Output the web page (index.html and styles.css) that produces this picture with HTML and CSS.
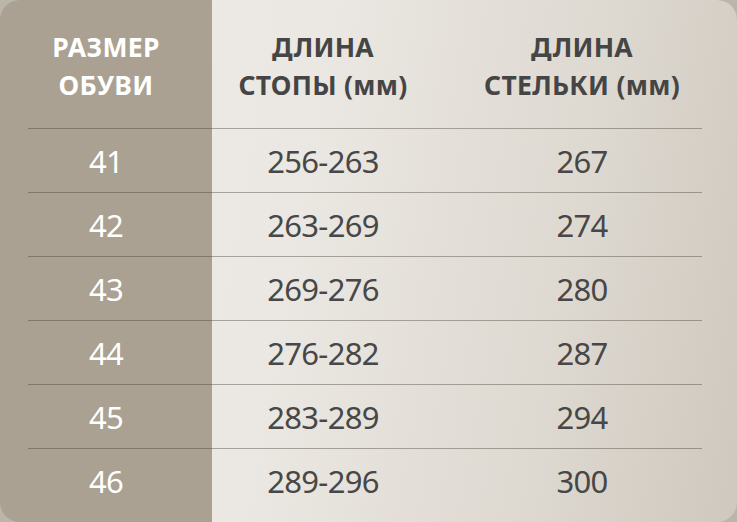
FILE: index.html
```html
<!DOCTYPE html>
<html lang="ru">
<head>
<meta charset="utf-8">
<link rel="stylesheet" href="styles.css">
</head>
<body>
<div class="card">
  <div class="row head">
    <div class="c1">РАЗМЕР<br>ОБУВИ</div>
    <div class="c2">ДЛИНА<br>СТОПЫ (мм)</div>
    <div class="c3">ДЛИНА<br>СТЕЛЬКИ (мм)</div>
  </div>
  <div class="row"><div class="c1">41</div><div class="c2">256-263</div><div class="c3">267</div></div>
  <div class="row"><div class="c1">42</div><div class="c2">263-269</div><div class="c3">274</div></div>
  <div class="row"><div class="c1">43</div><div class="c2">269-276</div><div class="c3">280</div></div>
  <div class="row"><div class="c1">44</div><div class="c2">276-282</div><div class="c3">287</div></div>
  <div class="row"><div class="c1">45</div><div class="c2">283-289</div><div class="c3">294</div></div>
  <div class="row last"><div class="c1">46</div><div class="c2">289-296</div><div class="c3">300</div></div>
</div>
</body>
</html>
```
FILE: styles.css
```css
html, body {
  margin: 0;
  padding: 0;
}
body {
  width: 737px;
  height: 522px;
  background: #bcb5aa;
  overflow: hidden;
  font-family: "Noto Sans", "Open Sans", sans-serif;
}
.card {
  width: 737px;
  height: 522px;
  border-radius: 20px;
  overflow: hidden;
  display: flex;
  flex-direction: column;
  background:
    linear-gradient(90deg, #aaa192 0, #aaa192 212px, transparent 212px),
    linear-gradient(100deg, #eeebe6 0%, #ebe7e2 40%, #ddd8d0 75%, #cfc8be 100%);
}
.row {
  display: grid;
  grid-template-columns: 156px 278px 240px;
  margin: 0 35px 0 28px;
  height: 64px;
  align-items: center;
  text-align: center;
  border-bottom: 1px solid rgba(75, 65, 50, 0.42);
  box-sizing: border-box;
  font-size: 31px;
  letter-spacing: -0.7px;
  color: #474747;
}
.row .c1 {
  color: #ffffff;
}
.row.head {
  height: 129px;
  font-size: 26.5px;
  font-weight: 700;
  line-height: 38px;
  letter-spacing: 0.3px;
  padding-top: 4px;
  color: #454545;
}
.row.head .c1 {
  color: #ffffff;
}
.row.last {
  border-bottom: none;
}
```
